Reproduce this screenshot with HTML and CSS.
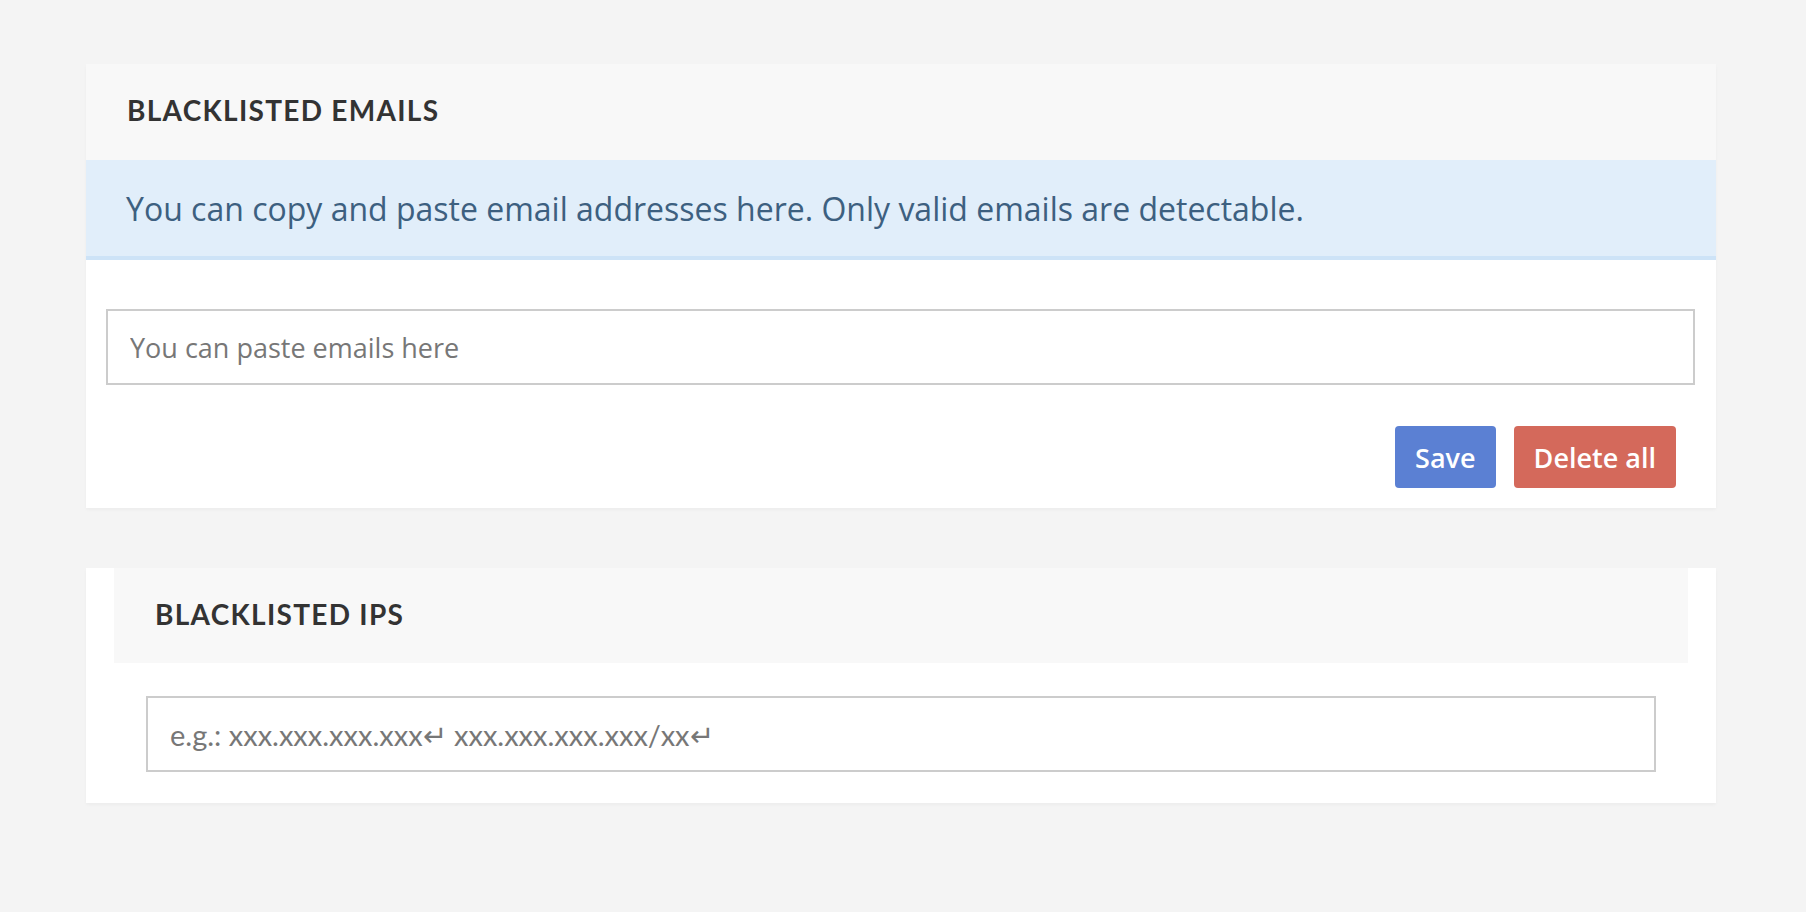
FILE: index.html
```html
<!DOCTYPE html>
<html lang="en">
<head>
    <meta charset="UTF-8">
    <meta name="viewport" content="width=device-width, initial-scale=1.0">
    <title>Blacklist</title>
    <link rel="stylesheet" href="styles.css">
</head>
<body>
<div class="panel">
    <div class="panel-head">
        <h2>Blacklisted emails</h2>
    </div>
    <div class="notice">You can copy and paste email addresses here. Only valid emails are detectable.</div>
    <div class="panel-body">
        <input type="text" class="field" placeholder="You can paste emails here">
        <div class="actions">
            <button class="btn btn-save">Save</button>
            <button class="btn btn-delete">Delete all</button>
        </div>
    </div>
</div>

<div class="panel panel-ips">
    <div class="panel-head">
        <h2>Blacklisted IPs</h2>
    </div>
    <div class="panel-body">
        <input type="text" class="field field-ips" placeholder="e.g.: xxx.xxx.xxx.xxx&#8629; xxx.xxx.xxx.xxx/xx&#8629;">
    </div>
</div>
</body>
</html>
```

FILE: styles.css
```css
body {
  margin: 0;
  padding: 64px 90px 0 86px;
  background-color: #f4f4f4;
  font-family: "Open Sans", sans-serif;
}

.panel {
  background-color: white;
  box-shadow: 0 2px 3px rgba(0, 0, 0, 0.03);
  margin-bottom: 60px;
}

.panel-head {
  box-sizing: border-box;
  height: 96px;
  padding: 0 41px 4px;
  display: flex;
  align-items: center;
  background-color: #f8f8f8;
}

.panel-head h2 {
  margin: 0;
  font-family: Lato, sans-serif;
  font-size: 28px;
  font-weight: 700;
  letter-spacing: 1.3px;
  text-transform: uppercase;
  color: #333;
}

.notice {
  height: 96px;
  padding: 0 40px;
  display: flex;
  align-items: center;
  background-color: #e1eefa;
  border-bottom: 4px solid #cde3f7;
  color: #3d6080;
  font-size: 32px;
}

.panel-body {
  padding: 49px 21px 20px 20px;
}

.field {
  box-sizing: border-box;
  width: 100%;
  height: 76px;
  padding: 0 22px;
  border: 2px solid #cccccc;
  font-family: "Open Sans", sans-serif;
  font-size: 27px;
  color: #333;
  outline: none;
}

.field::placeholder {
  color: #777;
}

.actions {
  display: flex;
  justify-content: flex-end;
  gap: 18px;
  margin-top: 41px;
  padding-right: 19px;
}

.btn {
  height: 62px;
  padding: 0 20px;
  border: none;
  border-radius: 4px;
  color: white;
  font-family: "Open Sans", sans-serif;
  font-size: 27px;
  font-weight: 600;
  cursor: pointer;
}

.btn-save {
  background-color: #5b80d3;
}

.btn-delete {
  background-color: #d4695b;
}

.panel-ips {
  padding: 0 28px 31px;
}

.panel-ips .panel-head {
  height: 95px;
}

.panel-ips .panel-body {
  padding: 33px 32px 0;
}

.field-ips {
  font-family: Lato, sans-serif;
  font-size: 29px;
}
```
